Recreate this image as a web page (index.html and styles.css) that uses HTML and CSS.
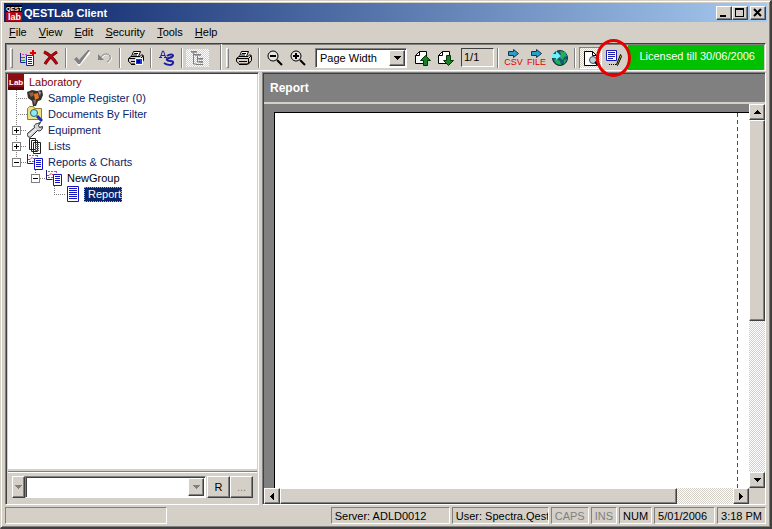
FILE: index.html
```html
<!DOCTYPE html>
<html lang="en">
<head>
<meta charset="utf-8">
<title>QESTLab Client</title>
<link rel="stylesheet" href="styles.css">
</head>
<body>
<svg class="defs" aria-hidden="true">
  <symbol id="arrow-down" viewBox="0 0 7 4"><path d="M0 0h7v1H6v1H5v1H4v1H3V3H2V2H1V1H0z"/></symbol>
  <symbol id="arrow-up" viewBox="0 0 7 4"><path d="M3 0h1v1h1v1h1v1h1v1H0V3h1V2h1V1h1z"/></symbol>
  <symbol id="arrow-left" viewBox="0 0 4 7"><path d="M4 0v7H3V6H2V5H1V4H0V3h1V2h1V1h1V0z"/></symbol>
  <symbol id="arrow-right" viewBox="0 0 4 7"><path d="M0 0v7h1V6h1V5h1V4h1V3H3V2H2V1H1V0z"/></symbol>
  <symbol id="group" viewBox="0 0 16 16">
    <path d="M.5 0v9.500h6" fill="none" stroke="#1c1c70"/>
    <path d="M2 1.500h8M10.500 1v3" stroke="#b050b0" stroke-dasharray="2 1" fill="none"/>
    <path d="M1 5.500h2l2-2 1 1h1" stroke="#d03060" fill="none"/><path d="M2 7.500h5" stroke="#20a040" stroke-dasharray="2 1"/>
    <path d="M7.500 4.500h8v11h-8z" fill="#fff" stroke="#1414c0"/>
    <path d="M9 6.500h5M9 8.500h5M9 10.500h5M9 12.500h5" stroke="#1414c0"/>
  </symbol>
  <symbol id="printer" viewBox="0 0 16 16">
    <path d="M5.500 1.500h7l-2 5h-7z" fill="#fff" stroke="#000"/><path d="M6 3.500h4M5 5h4" stroke="#000"/>
    <path d="M3 6.500h9l2-2 1.500 2v4l-3 3.500h-9L.5 11.500v-3z" fill="#d4d0c8" stroke="#000"/>
    <path d="M1 8.500h11.500v5M12.500 8.500l3-3M3 11.500h8M3 14.500h8l3-3" fill="none" stroke="#000"/>
  </symbol>
  <symbol id="lens" viewBox="0 0 16 16">
    <circle cx="6" cy="6" r="5" fill="#e8e6e0" stroke="#000"/><path d="M10 10l5 5" stroke="#000" stroke-width="2"/><path d="M3 6h6" stroke="#000" stroke-width="2"/>
  </symbol>
  <symbol id="page" viewBox="0 0 16 16"><path d="M4.500 1.500h7v12h-11v-8z" fill="#fff" stroke="#000"/><path d="M4.500 1.500v4h-4" fill="none" stroke="#000"/></symbol>
  <symbol id="export" viewBox="0 0 11 9"><path d="M.5 2.500h5v-2l5 4-5 4v-2h-5z" fill="#28a0c8" stroke="#103850"/></symbol>
</svg>
<div class="window">
  <header class="titlebar">
    <svg class="icon" viewBox="0 0 16 16" role="img" aria-label="QESTLab"><path fill="#000" d="M0 0h16v7H0z"/><path fill="#b00818" d="M0 7h16v9H0z"/><text class="logo-top" x="0" y="6">QEST</text><text class="logo-bottom" x="2" y="15">lab</text></svg>
    <h1>QESTLab Client</h1>
    <button class="raised caption" aria-label="Minimize"><svg viewBox="0 0 10 9"><path d="M1 7h6v2H1z"/></svg></button>
    <button class="raised caption" aria-label="Maximize"><svg viewBox="0 0 10 9"><path fill-rule="evenodd" d="M0 0h9v9H0zM1 2v6h7V2z"/></svg></button>
    <button class="raised caption close" aria-label="Close"><svg viewBox="0 0 10 9"><path d="M1 1l7 7M8 1L1 8" stroke="#000" stroke-width="2"/></svg></button>
  </header>
  <nav class="menu">
    <a href="#"><u>F</u>ile</a><a href="#"><u>V</u>iew</a><a href="#"><u>E</u>dit</a><a href="#"><u>S</u>ecurity</a><a href="#"><u>T</u>ools</a><a href="#"><u>H</u>elp</a>
  </nav>
  <div class="toolbar">
    <div class="band first">
      <span class="grip"></span>
      <button class="tool" aria-label="Add"><svg class="icon" viewBox="0 0 16 16"><path d="M.5 3v9.500h5" fill="none" stroke="#1c1c90"/><path d="M2 4.500h6" stroke="#d050c0" stroke-dasharray="2 1"/><path d="M1 7.500h4" stroke="#d03030"/><path d="M1 10.500h4" stroke="#20a040"/><path d="M6.500 5.500h7v10h-7z" fill="#fff" stroke="#1c1cb0"/><path d="M8 7.500h4M8 9.500h4M8 11.500h4M8 13.500h4" stroke="#1c1cb0"/><path d="M13 0v6M10 3h6" stroke="#e00000" stroke-width="2"/></svg></button>
      <button class="tool" aria-label="Delete"><svg class="icon" viewBox="0 0 16 16"><path d="M1 2c5 2 9 6 13 12M14 2C9 5 5 9 2 14" fill="none" stroke="#500" stroke-width="3"/><path d="M1 2c5 2 9 6 13 12M14 2C9 5 5 9 2 14" fill="none" stroke="#c00010" stroke-width="2"/></svg></button>
      <span class="sep"></span>
      <button class="tool" aria-label="Accept" disabled><svg class="icon" viewBox="0 0 16 16"><path d="M2 10l3 5L16 2" fill="none" stroke="#fff" stroke-width="2"/><path d="M0 9l3-2 2 3 9-10h2L6 14H4z" fill="#808080"/></svg></button>
      <button class="tool" aria-label="Undo" disabled><svg class="icon" viewBox="0 0 16 16"><path d="M4 9c4-6 9-5 10-2 1 3-1 5-3 6" fill="none" stroke="#fff"/><path d="M3 8c3-5 9-5 10-2 1 3-1 5-3 6" fill="none" stroke="#808080"/><path d="M1 4v6h6z" fill="#808080"/></svg></button>
      <span class="sep"></span>
      <button class="tool" aria-label="Print preview"><svg class="icon" viewBox="0 0 16 16"><use href="#printer"/><path d="M7.500 8.500h7v6h-7z" fill="#1840d0" stroke="#fff"/><path d="M9 10h3v3H9z" fill="#0000a0"/></svg></button>
      <span class="sep"></span>
      <button class="tool" aria-label="Signature"><svg class="icon" viewBox="0 0 16 16"><path d="M0 7.500h3M5 7.500h3M1.500 7l2-6h1l2 6M2 5.500h4" fill="none" stroke="#1c1ca0"/><path d="M8 6c4-3 8-1 5 1-2 1-6 1-5 3s7 0 6 3-6 2-9 0" fill="none" stroke="#1c1ca0" stroke-width="2"/></svg></button>
      <span class="sep"></span>
      <button class="tool checked" aria-label="Tree view" disabled><svg class="icon" viewBox="0 0 16 16"><path d="M1 1.500h6M3.500 2v12h3M4 4.500h7M7.500 5v7h2M8 8.500h5M9 11.500h4M6 14.500h7" fill="none" stroke="#808080"/><path d="M1 2.500h6M5 5.500h6M9 9.500h4M9 12.500h4" stroke="#a0a0a0"/></svg></button>
    </div>
    <div class="band second">
      <span class="grip"></span>
      <button class="tool" aria-label="Print"><svg class="icon"><use href="#printer"/></svg></button>
      <span class="sep"></span>
      <button class="tool" aria-label="Zoom out"><svg class="icon"><use href="#lens"/></svg></button>
      <button class="tool" aria-label="Zoom in"><svg class="icon" viewBox="0 0 16 16"><use href="#lens"/><path d="M6 3v6" stroke="#000" stroke-width="2"/></svg></button>
      <div class="combo zoom"><select aria-label="Zoom"><option>Page Width</option></select><span class="raised drop"><svg class="a-h"><use href="#arrow-down"/></svg></span></div>
      <button class="tool" aria-label="Previous page"><svg class="icon" viewBox="0 0 16 16"><use href="#page"/><path d="M10.500 5.500l5 5h-3v5h-4v-5h-3z" fill="#188028" stroke="#003800"/></svg></button>
      <button class="tool" aria-label="Next page"><svg class="icon" viewBox="0 0 16 16"><use href="#page"/><path d="M8.500 5.500h4v5h3l-5 5-5-5h3z" fill="#188028" stroke="#003800"/></svg></button>
      <input class="pages" aria-label="Page" value="1/1" readonly>
      <span class="sep"></span>
      <button class="tool export"><svg class="arrow"><use href="#export"/></svg><span>CSV</span></button>
      <button class="tool export"><svg class="arrow"><use href="#export"/></svg><span>FILE</span></button>
      <button class="tool" aria-label="Export to web"><svg class="icon" viewBox="0 0 16 16"><circle cx="8" cy="8" r="7.500" fill="#185878" stroke="#103040"/><path d="M8 1l5 1 2 4-3 1-1 3-3-2 1-3zM4 9l4 2 1 4-4-1-3-4zM12 10l3-1-3 5z" fill="#20b058"/><path d="M0 4h4V1l5 5-5 4V8H0z" fill="#70f0f8"/></svg></button>
      <span class="sep"></span>
      <button class="tool pressed" aria-label="Preview"><svg class="icon" viewBox="0 0 16 16"><path d="M1.500 1.500h8l4 4v10h-12z" fill="#fff" stroke="#000"/><path d="M9.500 1.500v4h4" fill="none" stroke="#000"/><circle cx="10" cy="10" r="3.500" fill="#b8d0d8" stroke="#405060"/><path d="M12 12l4 4" stroke="#000" stroke-width="2"/></svg></button>
      <button class="tool ringed" aria-label="Edit report"><svg class="icon" viewBox="0 0 16 16"><path d="M.5.500h10v10H.5z" fill="#fff" stroke="#1c1cb0"/><path d="M2 2.500h7M2 4.500h7M2 6.500h7M2 8.500h5" stroke="#1c1cb0"/><path d="M14.500 4.500l-4 10 1 1 4-9z" fill="#e0d040" stroke="#000"/><path d="M3 14.500h7" stroke="#000" stroke-dasharray="1 1"/></svg></button>
      <output class="license">Licensed till 30/06/2006</output>
    </div>
  </div>
  <main class="panes">
    <aside class="side">
      <div class="tree">
        <div class="row root"><svg class="icon" viewBox="0 0 16 16"><path fill="#8c0c14" d="M0 0h16v16H0z"/><path fill="#5c0008" d="M0 13h16v3H0z"/><text class="logo-lab" x="1" y="11">Lab</text></svg><span class="label">Laboratory</span></div>
        <ul>
          <li><div class="row"><span class="stub"></span><svg class="icon" viewBox="0 0 16 16"><path d="M0 2l5-2 5 1 5-1 1 5-2 5-3 1-2 5H6l-1-5-4-3z" fill="#38302c"/><path d="M2 3l4-1 1 3-3 2z" fill="#906048"/><path d="M7 4l4-1 1 5-4 2z" fill="#e87820"/><path d="M11 1l3 1-1 4z" fill="#a8a098"/><path d="M6 10h3l-1 5z" fill="#807870"/></svg><span class="label">Sample Register (0)</span></div></li>
          <li><div class="row"><span class="stub"></span><svg class="icon" viewBox="0 0 16 16"><path d="M.5 13.500v-11l2-2h4l1 2h7v11z" fill="#f0e080" stroke="#908030"/><circle cx="7" cy="7" r="3.500" fill="#90e8f0" stroke="#206880"/><path d="M10 10l5 5" stroke="#1830b0" stroke-width="3"/></svg><span class="label">Documents By Filter</span></div></li>
          <li><div class="row"><button class="expander plus" aria-label="Expand Equipment"></button><span class="stub"></span><svg class="icon" viewBox="0 0 16 16"><path d="M10.500 1.500l3-1-2 3 1 2 3-1c0 4-3 5-5 4l-6 6c-2 2-5 0-4-3l7-6c-1-2 1-4 3-4z" fill="#d0d4d8" stroke="#202020"/><path d="M2 13l7-6" stroke="#fff"/></svg><span class="label">Equipment</span></div></li>
          <li><div class="row"><button class="expander plus" aria-label="Expand Lists"></button><span class="stub"></span><svg class="icon" viewBox="0 0 16 16"><path d="M2.500.500h6v11h-6zM4.500 2.500h6v11h-6zM6.500 4.500h7v11h-7z" fill="#fff" stroke="#202020"/><path d="M8 6.500h4M8 8.500h4M8 10.500h4M8 12.500h4" stroke="#606060"/></svg><span class="label">Lists</span></div></li>
          <li><div class="row"><button class="expander" aria-label="Collapse Reports &amp; Charts"></button><span class="stub"></span><svg class="icon"><use href="#group"/></svg><span class="label">Reports &amp; Charts</span></div>
            <ul>
              <li><div class="row"><button class="expander" aria-label="Collapse NewGroup"></button><span class="stub"></span><svg class="icon"><use href="#group"/></svg><span class="label dark">NewGroup</span></div>
                <ul>
                  <li><div class="row"><span class="stub"></span><svg class="icon" viewBox="0 0 16 16"><path d="M2.500.500h11v15h-11z" fill="#fff" stroke="#1414c0"/><path d="M4 2.500h8M4 4.500h8M4 6.500h8M4 8.500h8M4 10.500h8M4 12.500h8" stroke="#1414c0"/></svg><span class="label selected">Report</span></div></li>
                </ul>
              </li>
            </ul>
          </li>
        </ul>
      </div>
      <div class="finder">
        <button class="raised mini" aria-label="Search options"><svg class="a-h grey"><use href="#arrow-down"/></svg></button>
        <div class="combo"><select aria-label="Search"><option></option></select><span class="raised drop"><svg class="a-h grey"><use href="#arrow-down"/></svg></span></div>
        <button class="raised square">R</button><button class="raised square dim">...</button>
      </div>
    </aside>
    <section class="report">
      <h2>Report</h2>
      <div class="viewer">
        <div class="desk"><div class="sheet"></div></div>
        <div class="bar vertical"><button class="raised" aria-label="Scroll up"><svg class="a-h"><use href="#arrow-up"/></svg></button><span class="raised thumb"></span><span class="rest"></span><button class="raised" aria-label="Scroll down"><svg class="a-h"><use href="#arrow-down"/></svg></button></div>
        <div class="bar horizontal"><button class="raised" aria-label="Scroll left"><svg class="a-v"><use href="#arrow-left"/></svg></button><span class="raised thumb"></span><span class="rest"></span><button class="raised" aria-label="Scroll right"><svg class="a-v"><use href="#arrow-right"/></svg></button></div>
      </div>
    </section>
  </main>
  <footer class="status">
    <span class="cell message"></span>
    <span class="cell server">Server: ADLD0012</span>
    <span class="cell user">User: Spectra.Qest</span>
    <span class="cell off">CAPS</span>
    <span class="cell off">INS</span>
    <span class="cell">NUM</span>
    <span class="cell date">5/01/2006</span>
    <span class="cell">3:18 PM</span>
  </footer>
</div>
</body>
</html>
```
FILE: styles.css
```css
* { box-sizing: border-box; }

:root {
  --face: #d4d0c8;
  --shadow: #808080;
  --deep: #404040;
  --ink: #0a246a;
  --dither: repeating-conic-gradient(#fff 0 25%, #d4d0c8 0 50%) 0 0 / 2px 2px;
}

body {
  margin: 0;
  background: var(--face);
  font: 11px/16px "Liberation Sans", Arial, sans-serif;
  color: #000;
}

button, input, select { font: inherit; color: inherit; margin: 0; padding: 0; border-radius: 0; }
svg { display: block; flex: none; }
.defs { position: absolute; width: 0; height: 0; }
.icon { width: 16px; height: 16px; }
.a-h { width: 7px; height: 4px; shape-rendering: crispEdges; }
.a-v { width: 4px; height: 7px; shape-rendering: crispEdges; }
.grey { fill: #808080; }

.window {
  display: flex;
  flex-direction: column;
  height: 100vh;
  padding: 2px 2px 0;
  border: 1px solid var(--face);
  border-right: 2px solid var(--deep);
  border-bottom: 2px solid var(--deep);
  box-shadow: inset 1px 1px #fff, inset -1px -1px var(--shadow);
}

.raised {
  display: flex;
  align-items: center;
  justify-content: center;
  background: var(--face);
  border: 1px solid;
  border-color: #fff var(--deep) var(--deep) #fff;
  box-shadow: inset -1px -1px var(--shadow);
}

/* Title bar */
.titlebar {
  display: flex;
  align-items: center;
  height: 19px;
  margin: 0 1px;
  padding: 0 1px 0 2px;
  background: linear-gradient(90deg, #0a246a, #a6caf0);
}
.titlebar h1 { flex: 1; margin: 0 0 0 2px; font-size: 11px; line-height: 16px; color: #fff; }
.caption { width: 16px; height: 14px; }
.caption svg { width: 10px; height: 9px; }
.close { margin-left: 2px; }
.logo-top { font: bold 6px "Liberation Sans", sans-serif; fill: #fff; }
.logo-bottom { font: bold 9px "Liberation Sans", sans-serif; fill: #fff; }
.logo-lab { font: bold 8px "Liberation Sans", sans-serif; fill: #fff; }

/* Menu */
.menu { display: flex; padding: 2px 0 3px; }
.menu a { padding: 0 6px; color: #000; text-decoration: none; }

/* Toolbar */
.toolbar {
  display: flex;
  height: 28px;
  margin: 0 2px 1px 2px;
  border: 1px solid;
  border-color: var(--deep) #fff #fff var(--deep);
  box-shadow: inset 1px 1px var(--shadow);
}
.band { display: flex; align-items: center; padding: 1px 1px 0 4px; }
.first { padding-right: 11px; border-right: 1px solid var(--shadow); }
.second { flex: 1; border-left: 1px solid #fff; }
.grip { width: 3px; height: 20px; margin-right: 3px; border: 1px solid; border-color: #fff var(--shadow) var(--shadow) #fff; }
.sep { width: 2px; height: 20px; margin: 0 3px; border-left: 1px solid var(--shadow); border-right: 1px solid #fff; }
.tool {
  display: flex;
  align-items: center;
  justify-content: center;
  width: 23px;
  height: 22px;
  border: 0;
  background: none;
}
.checked { height: 18px; background: var(--dither); }
.pressed { border: 1px solid; border-color: var(--shadow) #fff #fff var(--shadow); background: var(--dither); }
.export { flex-direction: column; }
.export .arrow { width: 11px; height: 9px; }
.export span { font-size: 9px; line-height: 8px; color: #e00000; }
.ringed { position: relative; }
.ringed::after {
  content: "";
  position: absolute;
  inset: -8px -6px;
  border: 3px solid #e80000;
  border-radius: 50%;
}
.combo {
  display: flex;
  flex: 1;
  height: 22px;
  border: 1px solid;
  border-color: var(--shadow) #fff #fff var(--shadow);
  box-shadow: inset 1px 1px var(--deep);
  background: #fff;
  padding: 1px;
}
.combo select { flex: 1; min-width: 0; padding-left: 4px; border: 0; background: none; appearance: none; outline: 0; }
.drop { width: 16px; }
.zoom { flex: none; width: 92px; height: 20px; margin: 0 4px 0 6px; }
.zoom select { padding-left: 3px; line-height: 14px; }
.pages { width: 33px; height: 19px; margin-left: 4px; padding: 0 0 2px 2px; border: 1px solid; border-color: var(--deep) #fff #fff var(--deep); background: var(--face); }
.license {
  flex: 1;
  align-self: stretch;
  margin-left: 3px;
  padding-right: 9px;
  background: #00c000;
  color: #fff;
  line-height: 23px;
  text-align: right;
  white-space: nowrap;
}

/* Panes */
.panes { display: flex; flex: 1; gap: 3px; min-height: 0; margin: 0 2px; }
.side, .report {
  display: flex;
  flex-direction: column;
  border: 1px solid;
  border-color: var(--shadow) #fff #fff var(--shadow);
}
.side { flex: none; width: 254px; padding: 1px 1px 0 2px; box-shadow: inset 1px 1px var(--deep); }
.tree { flex: 1; background: #fff; color: var(--ink); }
.tree ul { margin: 0; padding: 0; list-style: none; }
.tree ul ul { margin-left: 19px; }
.tree li { background: repeating-linear-gradient(#808080 0 1px, #fff 1px 2px) 8px 0 / 1px 100% no-repeat; }
.tree li:last-child { background-size: 1px 8px; }
.row { display: flex; align-items: center; height: 16px; padding-left: 4px; }
.root { padding-left: 0; color: #800000; }
.stub { width: 6px; height: 1px; background: repeating-linear-gradient(90deg, #808080 0 1px, #fff 1px 2px); }
.stub:first-child { width: 11px; margin-left: 4px; }
.expander {
  width: 9px;
  height: 9px;
  border: 1px solid var(--shadow);
  background: linear-gradient(#000, #000) center / 5px 1px no-repeat, #fff;
}
.plus { background: linear-gradient(#000, #000) center / 5px 1px no-repeat, linear-gradient(#000, #000) center / 1px 5px no-repeat, #fff; }
.label { margin-left: 5px; white-space: nowrap; }
.dark { color: #000; }
.selected { margin-left: 3px; padding: 0 1px 0 4px; line-height: 15px; background: var(--ink); color: #fff; outline: 1px dotted #c0b080; outline-offset: -1px; }

.finder { display: flex; padding: 4px 4px 6px 4px; margin-top: 2px; border-top: 1px solid var(--shadow); box-shadow: inset 0 1px #fff; }
.mini { width: 13px; }
.square { width: 23px; margin-left: 1px; }
.square + .square { margin-left: 0; }
.dim { color: var(--shadow); }

.report { flex: 1; min-width: 0; box-shadow: inset 1px 1px var(--deep); padding: 1px 0 0 1px; }
.report h2 { margin: 0; padding: 0 6px; font-size: 12px; line-height: 28px; color: #fff; background: #808080; border-bottom: 2px solid var(--face); }
.viewer { display: grid; flex: 1; grid-template: 1fr 16px / 1fr 16px; min-height: 0; }
.desk { display: flex; padding: 8px 0 0 10px; background: #808080; }
.sheet {
  flex: 1;
  border: 1px solid #000;
  border-width: 1px 0 0 1px;
  background: repeating-linear-gradient(#b02030 0 4px, #fff 4px 7px) right 11px top 0 / 1px 100% no-repeat, #fff;
}
.bar { display: flex; background: var(--dither); }
.vertical { flex-direction: column; }
.bar button { flex: none; width: 16px; height: 16px; }
.vertical .thumb { flex: 200; }
.vertical .rest { flex: 152; }
.horizontal .thumb { flex: 396; }
.horizontal .rest { flex: 56; }

/* Status bar */
.status { display: flex; gap: 2px; padding: 2px 2px 3px; }
.cell {
  height: 17px;
  padding: 0 3px;
  border: 1px solid;
  border-color: var(--shadow) #fff #fff var(--shadow);
  white-space: nowrap;
  overflow: hidden;
}
.message { width: 162px; margin-right: auto; }
.server { width: 119px; }
.user { width: 97px; }
.date { padding-right: 7px; }
.off { color: var(--shadow); }
```
